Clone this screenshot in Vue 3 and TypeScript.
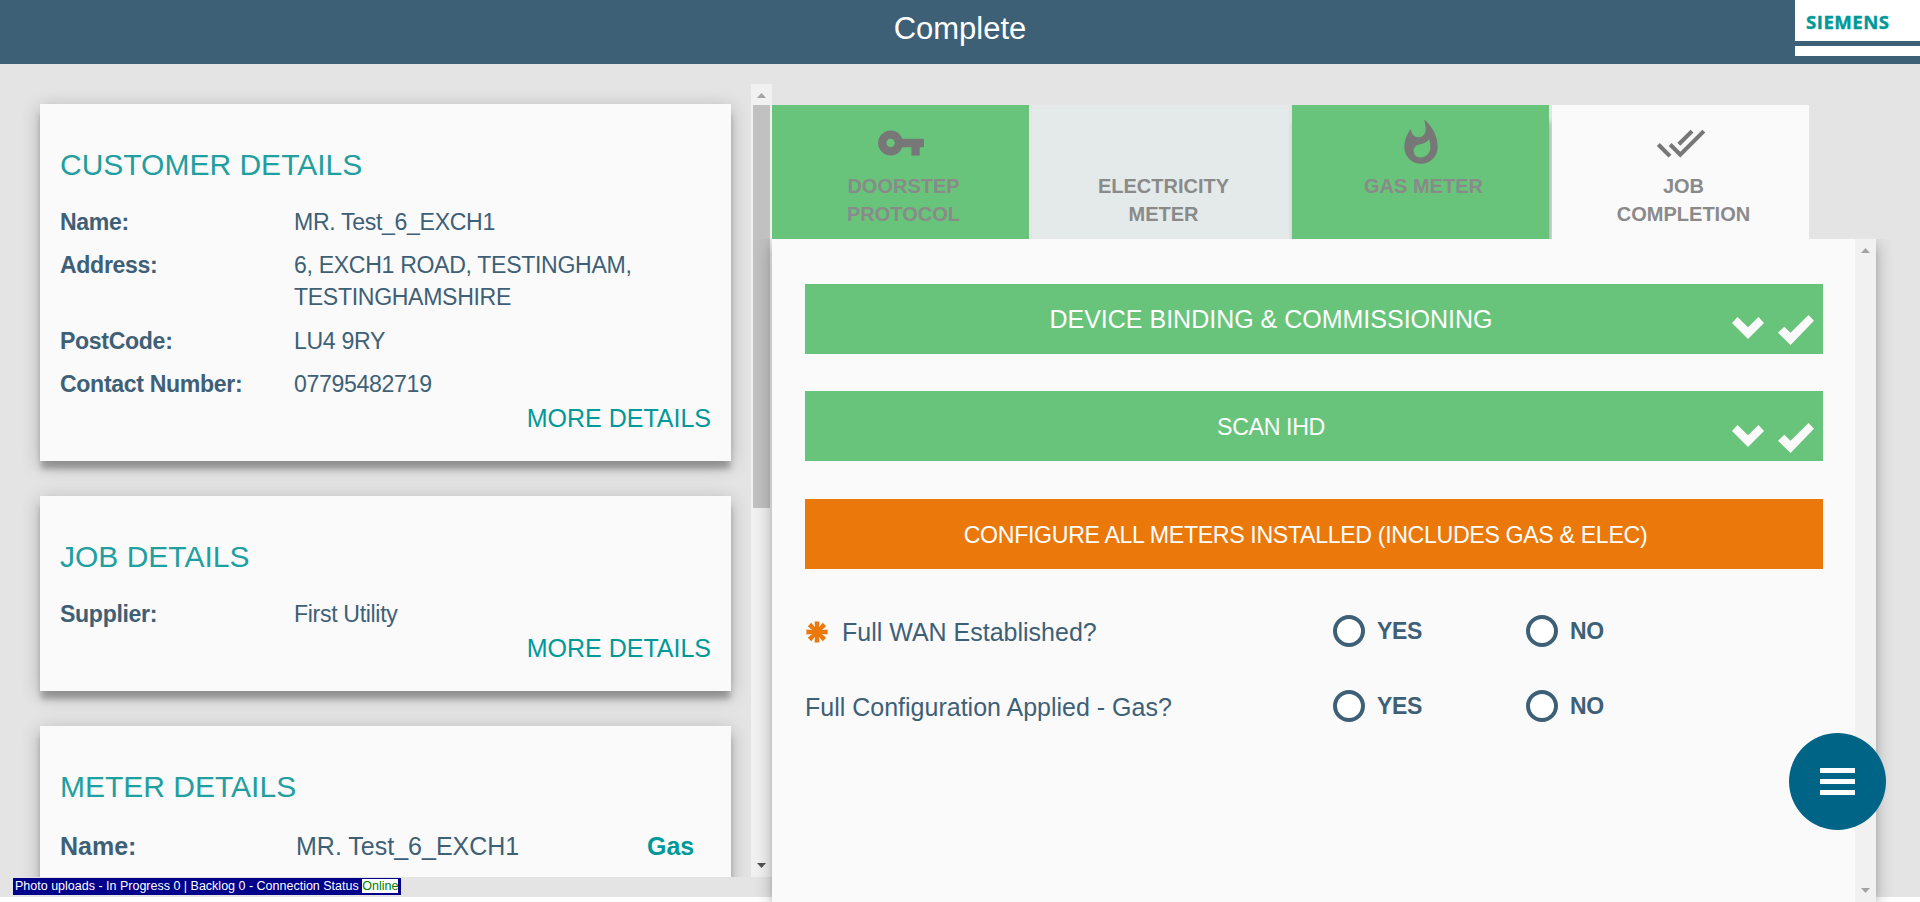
<script setup lang="ts">
interface Field {
  label: string
  value: string
}

interface Tab {
  label: string
  icon: string
  state: 'done' | 'idle' | 'active'
}

const customer: Field[] = [
  { label: 'Name:', value: 'MR. Test_6_EXCH1' },
  { label: 'Address:', value: '6, EXCH1 ROAD, TESTINGHAM, TESTINGHAMSHIRE' },
  { label: 'PostCode:', value: 'LU4 9RY' },
  { label: 'Contact Number:', value: '07795482719' },
]

const job: Field[] = [{ label: 'Supplier:', value: 'First Utility' }]

const tabs: Tab[] = [
  {
    label: 'DOORSTEP PROTOCOL',
    state: 'done',
    icon: 'M12.65 10C11.83 7.67 9.61 6 7 6c-3.31 0-6 2.69-6 6s2.69 6 6 6c2.61 0 4.83-1.67 5.65-4H17v4h4v-4h2v-4H12.65zM7 14c-1.1 0-2-.9-2-2s.9-2 2-2 2 .9 2 2-.9 2-2 2z',
  },
  { label: 'ELECTRICITY METER', state: 'idle', icon: '' },
  {
    label: 'GAS METER',
    state: 'done',
    icon: 'M13.5.67s.74 2.65.74 4.8c0 2.06-1.35 3.73-3.41 3.73-2.07 0-3.63-1.67-3.63-3.73l.03-.36C5.21 7.51 4 10.62 4 14c0 4.42 3.58 8 8 8s8-3.58 8-8C20 8.61 17.41 3.8 13.5.67zM11.71 19c-1.78 0-3.22-1.4-3.22-3.14 0-1.62 1.05-2.76 2.81-3.12 1.77-.36 3.6-1.21 4.62-2.58.39 1.29.59 2.65.59 4.04 0 2.65-2.15 4.8-4.8 4.8z',
  },
  {
    label: 'JOB COMPLETION',
    state: 'active',
    icon: 'M18 7l-1.41-1.41-6.34 6.34 1.41 1.41L18 7zm4.24-1.41L11.66 16.17 7.48 12l-1.41 1.41L11.66 19l12-12-1.42-1.41zM.41 13.41L6 19l1.41-1.41L1.83 12 .41 13.41z',
  },
]

const sections = [
  { title: 'DEVICE BINDING & COMMISSIONING', done: true, large: true },
  { title: 'SCAN IHD', done: true, large: false },
  { title: 'CONFIGURE ALL METERS INSTALLED (INCLUDES GAS & ELEC)', done: false, large: false },
]

const questions = [
  { text: 'Full WAN Established?', required: true },
  { text: 'Full Configuration Applied - Gas?', required: false },
]

const spokes = [0, 45, 90, 135]
</script>

<template>
  <div class="screen">
    <header class="topbar">
      <h1>Complete</h1>
      <div class="brand">
        <span class="brand-name">SIEMENS</span>
        <i class="brand-stripe"></i>
      </div>
    </header>

    <div class="body">
      <aside class="side">
        <div class="cards">
          <section class="card customer">
            <h2>CUSTOMER DETAILS</h2>
            <dl>
              <div v-for="f in customer" :key="f.label" class="field">
                <dt>{{ f.label }}</dt>
                <dd>{{ f.value }}</dd>
              </div>
            </dl>
            <a class="more">MORE DETAILS</a>
          </section>
          <section class="card job">
            <h2>JOB DETAILS</h2>
            <dl>
              <div v-for="f in job" :key="f.label" class="field">
                <dt>{{ f.label }}</dt>
                <dd>{{ f.value }}</dd>
              </div>
            </dl>
            <a class="more">MORE DETAILS</a>
          </section>
          <section class="card meter">
            <h2>METER DETAILS</h2>
            <div class="meter-row">
              <b>Name:</b>
              <span>MR. Test_6_EXCH1</span>
              <b class="fuel">Gas</b>
            </div>
          </section>
        </div>
        <div class="scrollbar side-scroll">
          <svg class="arrow" viewBox="0 0 9 5"><path d="M0 5L4.5 0L9 5z" /></svg>
          <i class="thumb"></i>
          <svg class="arrow dark" viewBox="0 0 9 5"><path d="M0 0H9L4.5 5z" /></svg>
        </div>
      </aside>

      <main class="main">
        <nav class="tabs">
          <div v-for="t in tabs" :key="t.label" class="tab" :class="t.state">
            <svg class="tab-icon" viewBox="0 0 24 24"><path :d="t.icon" /></svg>
            <span>{{ t.label }}</span>
          </div>
        </nav>

        <div class="panel">
          <div class="content">
            <div
              v-for="s in sections"
              :key="s.title"
              class="bar"
              :class="{ done: s.done, large: s.large }"
            >
              <span>{{ s.title }}</span>
              <div v-if="s.done" class="marks">
                <svg class="chevron" viewBox="0 0 32 22"><path d="M5.5 0L16 10.3L26.5 0L32 6L16 22L0 6z" /></svg>
                <svg class="tick" viewBox="0 0 36 30"><path d="M30.5 0L36 5.7L12.5 30L0 17.7L6.3 11.7L12.5 17.7z" /></svg>
              </div>
            </div>

            <div class="questions">
              <div v-for="q in questions" :key="q.text" class="question">
                <div class="prompt">
                  <svg v-if="q.required" class="star" viewBox="-11 -11 22 22">
                    <path v-for="a in spokes" :key="a" d="M-2.4 -10.6H2.4L1.6 0L2.4 10.6H-2.4L-1.6 0z" :transform="`rotate(${a})`" />
                    <circle r="5" />
                  </svg>
                  <span>{{ q.text }}</span>
                </div>
                <label class="choice"><i class="radio"></i><b>YES</b></label>
                <label class="choice"><i class="radio"></i><b>NO</b></label>
              </div>
            </div>
          </div>
          <div class="scrollbar panel-scroll">
            <svg class="arrow" viewBox="0 0 9 5"><path d="M0 5L4.5 0L9 5z" /></svg>
            <svg class="arrow" viewBox="0 0 9 5"><path d="M0 0H9L4.5 5z" /></svg>
          </div>
        </div>
      </main>
    </div>

    <div class="status">
      Photo uploads - In Progress 0 | Backlog 0 - Connection Status <span class="online">Online</span>
    </div>
    <button class="fab" aria-label="Menu"><i></i><i></i><i></i></button>
  </div>
</template>

<style>
body {
  margin: 0;
  overflow: hidden;
}
</style>

<style scoped>
.screen {
  position: relative;
  box-sizing: border-box;
  width: 1920px;
  height: 902px;
  overflow: hidden;
  background: linear-gradient(#e4e4e4 897px, #fff 897px);
  color: #3e6077;
  font-family: "Liberation Sans", Arial, sans-serif;
}
h1, h2, dl, dd { margin: 0; font-weight: 400; }
i { display: block; }

.topbar {
  display: flex;
  justify-content: center;
  height: 64px;
  background: #3e6077;
  color: #fff;
}
h1 { font-size: 31px; line-height: 58px; }
.brand {
  position: absolute;
  top: 0;
  right: 0;
  width: 125px;
  height: 56px;
  background: #fff;
}
.brand-name {
  display: block;
  height: 41px;
  padding-left: 11px;
  color: #009999;
  font: 700 18.6px/44px "Open Sans", "Noto Sans", sans-serif;
  letter-spacing: 0.5px;
  -webkit-text-stroke: 0.4px #009999;
}
.brand-stripe { height: 5px; background: #3e6077; }

.body { display: flex; }
.side {
  display: flex;
  width: 772px;
  height: 793px;
  margin-top: 20px;
  overflow: hidden;
}
.cards {
  display: flex;
  flex-direction: column;
  gap: 35px;
  width: 691px;
  padding: 20px 20px 0 40px;
}
.card {
  display: flex;
  flex: none;
  flex-direction: column;
  box-sizing: border-box;
  padding: 43px 20px 0;
  background: #fafafa;
  box-shadow: 0 9px 6px -1px rgba(0, 0, 0, 0.26), 0 4px 18px rgba(0, 0, 0, 0.24);
}
.customer { height: 357px; }
.job { height: 195px; }
.meter { height: 330px; }
h2 { height: 59px; color: #1f9f9f; font-size: 30px; line-height: 36px; }
.field {
  display: flex;
  margin-bottom: 11.3px;
  font-size: 23.1px;
  letter-spacing: -0.33px;
  line-height: 32px;
}
dt { width: 234px; font-weight: 700; }
dd { width: 370px; }
.more {
  align-self: flex-end;
  margin-top: -11px;
  color: #009999;
  font-size: 25px;
  line-height: 36px;
}
.meter-row { display: flex; font-size: 25px; line-height: 36px; }
.meter-row b:first-child { width: 236px; }
.meter-row span { width: 351px; }
.fuel { color: #009999; }

.scrollbar {
  display: flex;
  flex: none;
  flex-direction: column;
  align-items: center;
  justify-content: space-between;
  box-sizing: border-box;
  width: 21px;
  padding: 9px 0;
  background: #f1f1f1;
}
.arrow { width: 9px; height: 5px; fill: #a3a3a3; }
.arrow.dark { fill: #505050; }
.side-scroll { justify-content: flex-start; }
.side-scroll .thumb { width: 17px; height: 403px; margin-top: 7px; background: #c1c1c1; }
.side-scroll .dark { margin-top: auto; }

.main { width: 1104px; margin-top: 41px; }
.tabs { display: flex; gap: 3px; height: 134px; }
.tab {
  display: flex;
  flex-direction: column;
  align-items: center;
  box-sizing: border-box;
  width: 257px;
  padding-top: 13px;
  background: #e4eae9;
  color: #8a8a8a;
  font-size: 20px;
  font-weight: 700;
  line-height: 28px;
  text-align: center;
}
.tab.done { background: #68c47a; }
.tab.done:nth-child(3) { box-shadow: 2px 16px 6px -1px rgba(0, 0, 0, 0.3); }
.tab.active { background: #fafafa; }
.tab-icon { width: 50px; height: 50px; margin-bottom: 4px; fill: #777; }
.tab span { width: 140px; padding-left: 6px; }
.panel {
  position: relative;
  display: flex;
  height: 663px;
  background: #fafafa;
  box-shadow: 0 8px 6px -3px rgba(0, 0, 0, 0.25), 0 4px 16px rgba(0, 0, 0, 0.3);
  clip-path: inset(0 -40px 0 -40px);
}
.content { flex: 1; padding: 45px 32px 0 33px; }
.bar {
  position: relative;
  display: flex;
  justify-content: center;
  box-sizing: border-box;
  height: 70px;
  margin-bottom: 37.4px;
  padding-right: 17px;
  background: #eb780a;
  color: #fff;
  font-size: 23.2px;
  letter-spacing: -0.36px;
  line-height: 72px;
}
.bar.large { font-size: 25px; letter-spacing: 0; line-height: 71px; }
.bar.done { padding-right: 86px; background: #68c47a; }
.marks {
  position: absolute;
  top: 31.3px;
  right: 9px;
  display: flex;
  gap: 14px;
  fill: #fafafa;
}
.chevron { width: 32px; height: 22px; margin-top: 2px; }
.tick { width: 36px; height: 30px; }
.question { display: flex; align-items: center; height: 75px; }
.questions { margin-top: -13px; }
.prompt {
  display: flex;
  align-items: center;
  width: 528px;
  padding-top: 4px;
  font-size: 25px;
}
.star { width: 22px; height: 22px; margin: -2px 14px 0 1px; fill: #eb780a; }
.choice { display: flex; align-items: center; width: 193px; font-size: 23px; letter-spacing: -0.3px; }
.choice b { padding-top: 1px; }
.radio {
  box-sizing: border-box;
  width: 32px;
  height: 32px;
  margin-right: 12px;
  border: 4px solid #3e6077;
  border-radius: 50%;
  background: #fff;
}

.status {
  position: absolute;
  left: 13px;
  top: 878px;
  box-sizing: border-box;
  height: 17px;
  padding: 0 2.5px 0 2px;
  background: #00008b;
  color: #fff;
  font-size: 12.5px;
  line-height: 16px;
  white-space: nowrap;
}
.online { background: #fff; color: #008000; }

.fab {
  position: absolute;
  left: 1788.5px;
  top: 732.5px;
  display: flex;
  flex-direction: column;
  align-items: center;
  justify-content: center;
  gap: 6px;
  width: 97px;
  height: 97px;
  padding: 0;
  border: 0;
  border-radius: 50%;
  background: #006487;
}
.fab i { width: 35px; height: 5px; background: #fff; }
</style>
